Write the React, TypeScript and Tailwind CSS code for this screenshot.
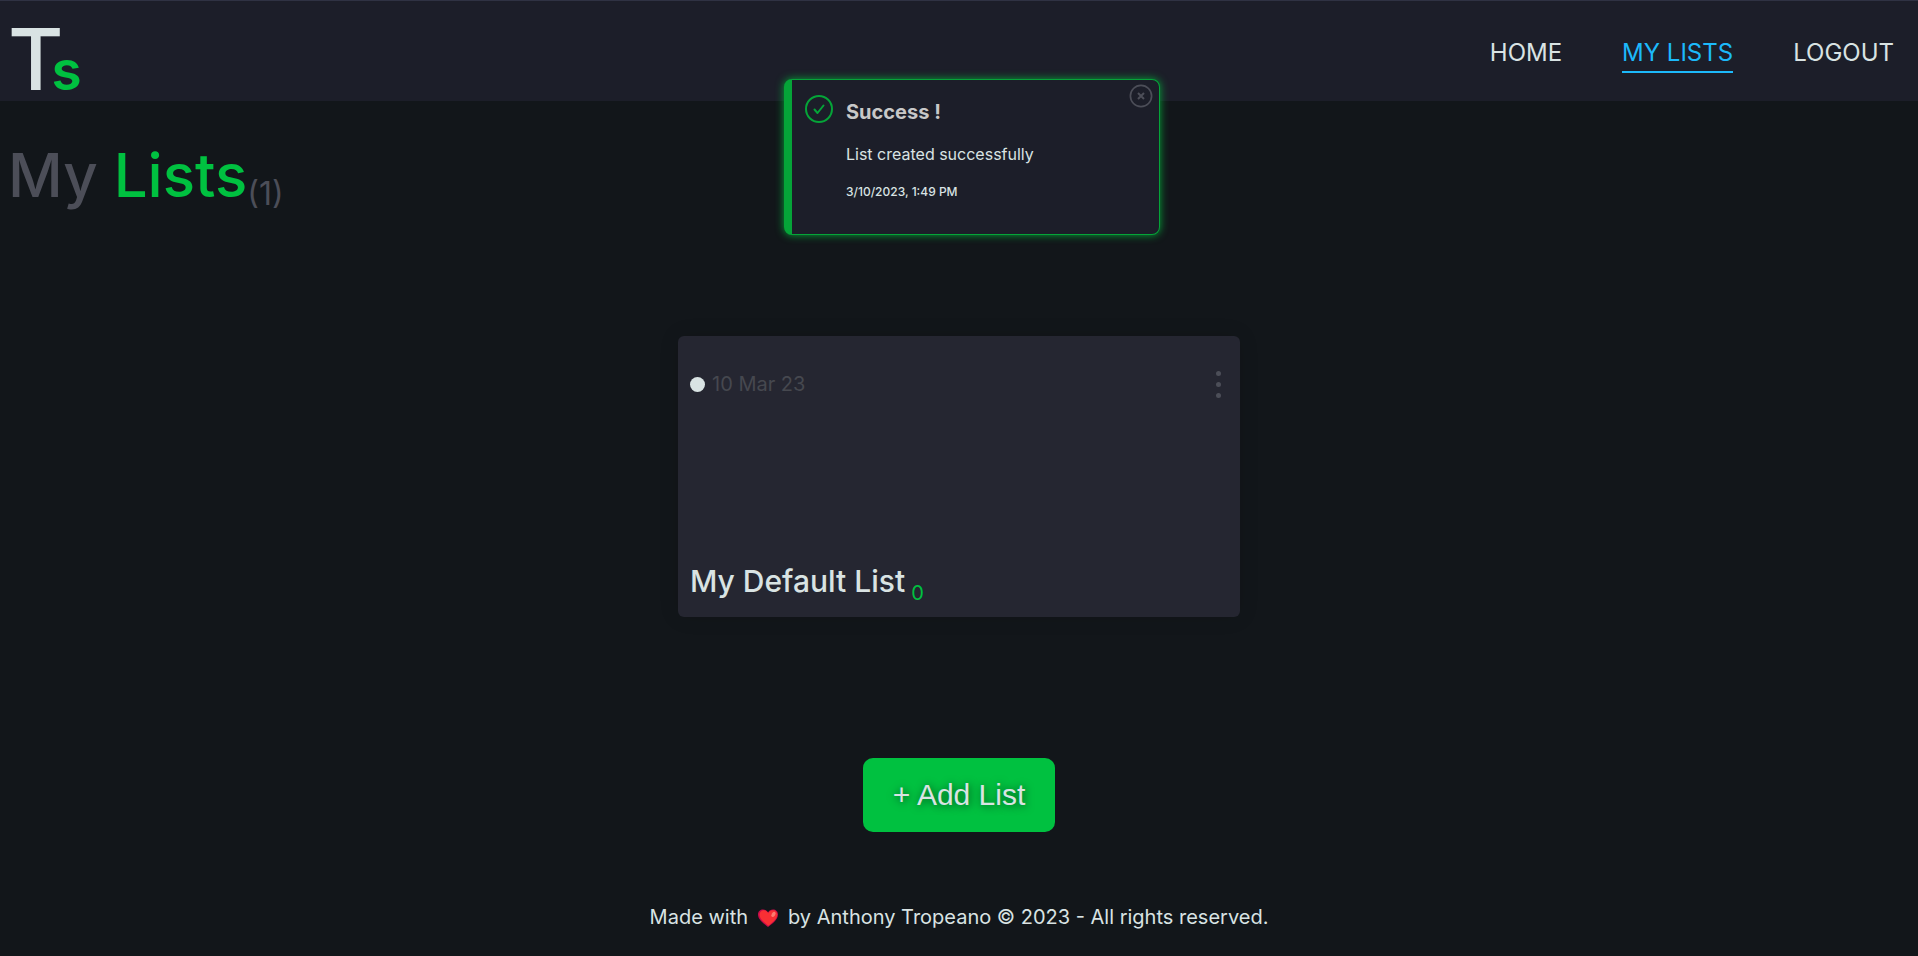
import React from "react";

const navLinks = [
  { label: "HOME", href: "#home", active: false },
  { label: "MY LISTS", href: "#lists", active: true },
  { label: "LOGOUT", href: "#logout", active: false },
];

function Header() {
  return (
    <header className="flex items-center justify-between border-t border-[#2f3243] bg-[#1c1e29] pl-2 pr-6">
      <a href="#home" className="flex h-[100px] items-baseline pt-4 leading-none">
        <span className="text-[85px] leading-[85px] font-medium text-[#d9e3e3]">T</span>
        <span className="-ml-3 text-[55px] leading-[60px] font-semibold text-[#00c140]">s</span>
      </a>
      <nav className="flex gap-[60px] pt-1">
        {navLinks.map((link) => (
          <a
            key={link.label}
            href={link.href}
            aria-current={link.active ? "page" : undefined}
            className={
              link.active
                ? "border-b-2 border-[#1cb9fa] pt-1 pb-[2px] text-2xl leading-8 text-[#1cb9fa]"
                : "border-b-2 border-transparent pt-1 pb-[2px] text-2xl leading-8 text-[#d9e3e3]"
            }
          >
            {link.label}
          </a>
        ))}
      </nav>
    </header>
  );
}

function Toast() {
  return (
    <div className="pointer-events-none absolute inset-x-0 top-[79px] flex justify-center pl-[26px]">
      <section
        role="status"
        className="pointer-events-auto relative flex h-[156px] w-[376px] gap-[13px] rounded-lg border border-l-8 border-[#05a438] bg-[#1c1e29] pl-[13px] shadow-[0_0_8px_#05a438]"
      >
        <svg viewBox="0 0 28 28" className="mt-[15px] size-7 shrink-0" fill="none" stroke="#05a438" strokeWidth="2">
          <circle cx="14" cy="14" r="13" />
          <path d="M9.5 14.5l3 3.5 6-7.5" strokeLinecap="round" strokeLinejoin="round" />
        </svg>
        <div className="pt-5 text-[#d9e3e3]">
          <h2 className="text-xl leading-6 font-bold text-[#c8c8c8]">Success !</h2>
          <p className="mt-5 text-base leading-5">List created successfully</p>
          <p className="mt-5 text-xs leading-4 font-medium">3/10/2023, 1:49 PM</p>
        </div>
        <button type="button" aria-label="Close" className="absolute top-1 right-[6px]">
          <svg viewBox="0 0 24 24" className="size-6" fill="none" stroke="#4c4e58" strokeWidth="1.7">
            <circle cx="12" cy="12" r="10.6" />
            <path d="M9 9l6 6M15 9l-6 6" strokeWidth="2" />
          </svg>
        </button>
      </section>
    </div>
  );
}

function ListCard() {
  return (
    <article className="flex h-[281px] w-[562px] flex-col justify-between rounded-md bg-[#252631] px-3 pt-8 pb-4 shadow-[0_0_20px_rgba(0,0,0,0.12)]">
      <div className="flex items-center justify-between">
        <div className="flex items-center gap-[7px]">
          <span className="size-[15px] rounded-full bg-[#d9e3e3]" />
          <time dateTime="2023-03-10" className="text-xl leading-8 text-[#46484f]">
            10 Mar 23
          </time>
        </div>
        <button type="button" aria-label="List options" className="flex w-5 flex-col items-center gap-[6px]">
          <span className="size-[5px] rounded-full bg-[#4c4e58]" />
          <span className="size-[5px] rounded-full bg-[#4c4e58]" />
          <span className="size-[5px] rounded-full bg-[#4c4e58]" />
        </button>
      </div>
      <h2 className="flex items-end gap-[6px] text-[30px] leading-10 font-medium text-[#d9e3e3]">
        My Default List
        <span className="text-xl leading-4 font-normal text-[#00c140]">0</span>
      </h2>
    </article>
  );
}

function Heart() {
  return (
    <svg viewBox="0 0 20 18" className="mx-[10px] inline h-[18px] w-5 align-[-3px]" role="img" aria-label="love">
      <path
        d="M10 18C7 15.500 0 11 0 5.500 0 2.500 2.200.5 5 .5c2.200 0 4 1.200 5 3 1-1.800 2.800-3 5-3 2.800 0 5 2 5 5C20 11 13 15.500 10 18z"
        fill="#ca0b4a"
      />
      <path
        d="M10.500 16.800C7.500 14.300 1.500 10.500 1.500 5.800 1.500 3 3.500 1.200 5.800 1.200c2 0 3.700 1.300 4.400 3.100.8-1.800 2.600-3.100 4.700-3.100 2.500 0 4.300 1.800 4.300 4.400 0 4.700-5.700 8.700-8.700 11.200z"
        fill="#f92f34"
      />
      <ellipse cx="15.500" cy="5.300" rx="1.800" ry="2.800" transform="rotate(30 15.500 5.300)" fill="#ff7a70" />
    </svg>
  );
}

export default function App() {
  return (
    <div className="relative flex min-h-screen flex-col bg-[#12161a] font-['Inter',sans-serif]">
      <Header />
      <Toast />
      <main className="flex flex-col">
        <h1 className="flex items-end pt-[38px] pl-2 text-[60px] leading-[73px] font-medium text-[#4c4e58]">
          <span>
            My <span className="text-[#00c140]">Lists</span>
          </span>
          <span className="text-[32px] leading-9 font-normal">(1)</span>
        </h1>
        <div className="flex justify-center pt-[124px]">
          <ListCard />
        </div>
        <div className="flex justify-center pt-[141px]">
          <button
            type="button"
            className="h-[74px] w-48 rounded-[10px] bg-[#00c140] font-['Liberation_Sans',sans-serif] text-[30px] leading-9 text-[#d9e3e3] [text-shadow:1px_1px_8px_rgba(0,0,0,0.6)]"
          >
            + Add List
          </button>
        </div>
      </main>
      <footer className="pt-[73px] pb-6 text-center text-xl leading-6 text-[#d9e3e3]">
        Made with
        <Heart />
        by Anthony Tropeano © 2023 - All rights reserved.
      </footer>
    </div>
  );
}
